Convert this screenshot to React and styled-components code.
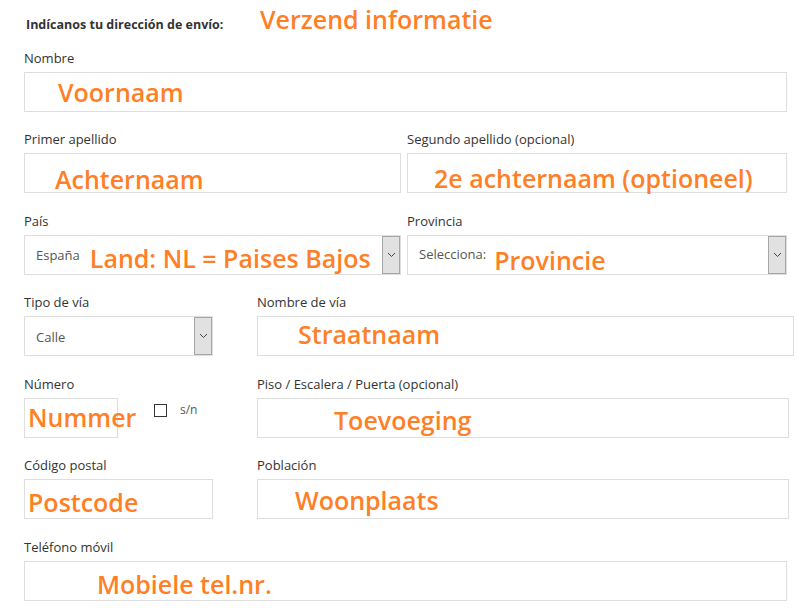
import React from "react";
import styled, { createGlobalStyle } from "styled-components";

const Global = createGlobalStyle`
  html, body { margin: 0; padding: 0; background: #fff; }
  body { font-family: "Open Sans", "Noto Sans", sans-serif; color: #333; }
`;

const Form = styled.div`
  padding: 3px 0 0 24px;
  width: 786px;
  display: flex;
  flex-direction: column;
  gap: 19px;
`;

const Header = styled.div`
  display: flex;
  align-items: baseline;
  padding-left: 2px;
  height: 32px;
  margin-bottom: -4px;
`;

const Title = styled.span`
  font-weight: 700;
  font-size: 12.5px;
  color: #333;
  width: 234px;
`;

const Note = styled.span`
  color: #ff7f27;
  font-size: 25px;
  font-weight: 600;
  line-height: 26px;
  white-space: nowrap;
  margin-top: ${(p) => p.$top || 0}px;
  margin-left: ${(p) => p.$left || 0}px;
`;

const HeadNote = styled(Note)`
  line-height: 32px;
`;

const Row = styled.div`
  display: grid;
  grid-template-columns: ${(p) => p.$cols};
  column-gap: ${(p) => p.$gap || 0}px;
  margin-top: ${(p) => p.$mt || 0}px;
`;

const Field = styled.div`
  display: flex;
  flex-direction: column;
`;

const Label = styled.label`
  font-size: 13px;
  line-height: 17px;
  margin-bottom: 5px;
  color: #333;
  white-space: nowrap;
`;

const Box = styled.div`
  box-sizing: border-box;
  height: 40px;
  width: ${(p) => (p.$w ? `${p.$w}px` : "100%")};
  border: 1px solid #dedede;
  background: #fff;
  display: flex;
  align-items: flex-start;
  flex-shrink: 0;
`;

const SelectText = styled.span`
  font-size: 13px;
  line-height: 17px;
  color: #555;
  margin: ${(p) => p.$top || 11}px 0 0 11px;
  white-space: nowrap;
`;

const Arrow = styled.div`
  margin-left: auto;
  align-self: stretch;
  width: 18px;
  box-sizing: border-box;
  background: #e1e1e1;
  border: 1px solid #a6a6a6;
  display: flex;
  align-items: center;
  justify-content: center;
`;

const Inline = styled.div`
  display: flex;
  align-items: flex-start;
`;

const Check = styled.span`
  box-sizing: border-box;
  width: 13px;
  height: 13px;
  border: 1px solid #333;
  background: #fff;
  margin: 6px 0 0 36px;
`;

const CheckLabel = styled.span`
  font-size: 12px;
  line-height: 17px;
  color: #555;
  margin: 3px 0 0 13px;
`;

const Chevron = () => (
  <svg width="9" height="6" viewBox="0 0 9 6">
    <path d="M1 1l3.5 3.5L8 1" fill="none" stroke="#444" strokeWidth="1" />
  </svg>
);

const Select = ({ value, top, children }) => (
  <Box>
    <SelectText $top={top}>{value}</SelectText>
    {children}
    <Arrow>
      <Chevron />
    </Arrow>
  </Box>
);

export default function App() {
  return (
    <>
      <Global />
      <Form>
        <Header>
          <Title>Indícanos tu dirección de envío:</Title>
          <HeadNote>Verzend informatie</HeadNote>
        </Header>

        <Row $cols="763px">
          <Field>
            <Label>Nombre</Label>
            <Box>
              <Note $left={33} $top={6}>Voornaam</Note>
            </Box>
          </Field>
        </Row>

        <Row $cols="377px 380px" $gap={6}>
          <Field>
            <Label>Primer apellido</Label>
            <Box>
              <Note $left={30} $top={12}>Achternaam</Note>
            </Box>
          </Field>
          <Field>
            <Label>Segundo apellido (opcional)</Label>
            <Box>
              <Note $left={26} $top={11}>2e achternaam (optioneel)</Note>
            </Box>
          </Field>
        </Row>

        <Row $cols="377px 380px" $gap={6} $mt={1}>
          <Field>
            <Label>País</Label>
            <Select value="España" top={11}>
              <Note $left={10} $top={9}>Land: NL = Paises Bajos</Note>
            </Select>
          </Field>
          <Field>
            <Label>Provincia</Label>
            <Select value="Selecciona:" top={10}>
              <Note $left={8} $top={11}>Provincie</Note>
            </Select>
          </Field>
        </Row>

        <Row $cols="189px 537px" $gap={44}>
          <Field>
            <Label>Tipo de vía</Label>
            <Select value="Calle" top={12} />
          </Field>
          <Field>
            <Label>Nombre de vía</Label>
            <Box>
              <Note $left={40} $top={4}>Straatnaam</Note>
            </Box>
          </Field>
        </Row>

        <Row $cols="189px 532px" $gap={44} $mt={1}>
          <Field>
            <Label>Número</Label>
            <Inline>
              <Box $w={94}>
                <Note $left={3} $top={5}>Nummer</Note>
              </Box>
              <Check />
              <CheckLabel>s/n</CheckLabel>
            </Inline>
          </Field>
          <Field>
            <Label>Piso / Escalera / Puerta (opcional)</Label>
            <Box>
              <Note $left={76} $top={8}>Toevoeging</Note>
            </Box>
          </Field>
        </Row>

        <Row $cols="189px 532px" $gap={44}>
          <Field>
            <Label>Código postal</Label>
            <Box>
              <Note $left={3} $top={9}>Postcode</Note>
            </Box>
          </Field>
          <Field>
            <Label>Población</Label>
            <Box>
              <Note $left={37} $top={7}>Woonplaats</Note>
            </Box>
          </Field>
        </Row>

        <Row $cols="763px" $mt={1}>
          <Field>
            <Label>Teléfono móvil</Label>
            <Box>
              <Note $left={72} $top={9}>Mobiele tel.nr.</Note>
            </Box>
          </Field>
        </Row>
      </Form>
    </>
  );
}
